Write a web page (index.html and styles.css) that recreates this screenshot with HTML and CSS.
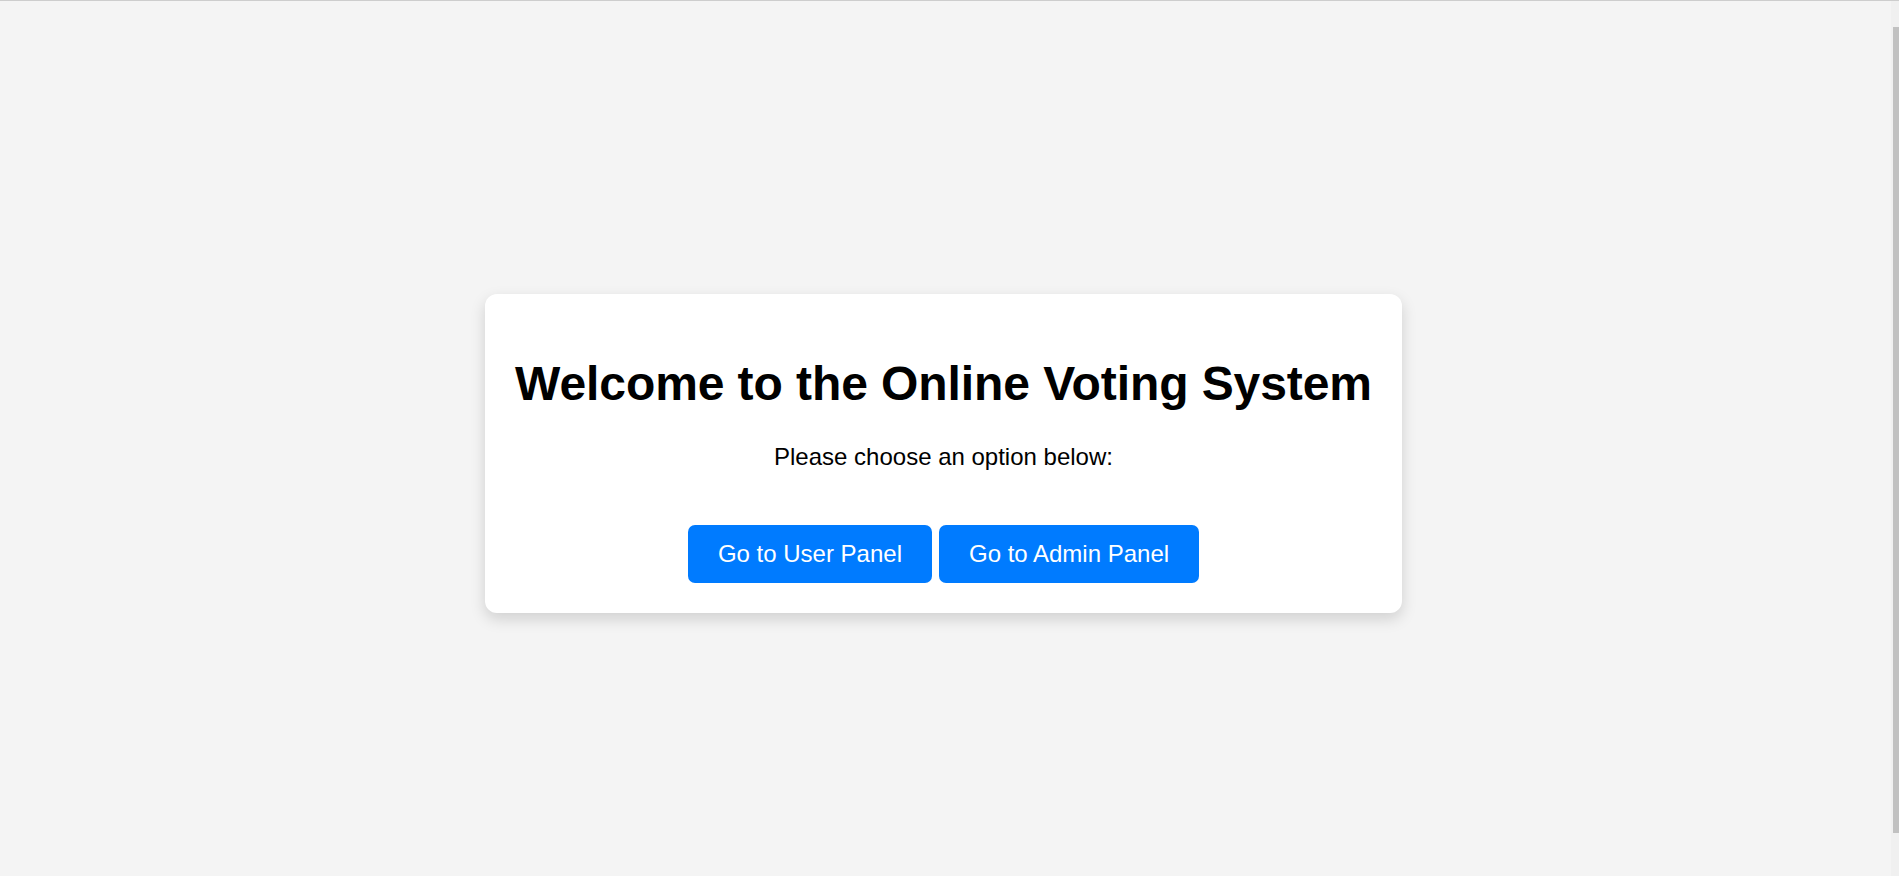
FILE: index.html
```html
<!DOCTYPE html>
<html lang="en">
<head>
<meta charset="utf-8">
<title>Online Voting System</title>
<link rel="stylesheet" href="styles.css">
</head>
<body>
  <div class="card">
    <h1 class="title">Welcome to the Online Voting System</h1>
    <p class="lead">Please choose an option below:</p>
    <div class="actions">
      <button class="btn" type="button">Go to User Panel</button>
      <button class="btn" type="button">Go to Admin Panel</button>
    </div>
  </div>
  <div class="scrollbar" aria-hidden="true"><div class="scrollbar-thumb"></div></div>
</body>
</html>
```

FILE: styles.css
```css
html {
  background: #f4f4f4;
  border-top: 1px solid #cdcdcd;
}

body {
  margin: 12px;
  box-sizing: border-box;
  height: 100vh;
  padding: 4px 12px 0 0;
  display: flex;
  justify-content: center;
  align-items: center;
  font-family: "Liberation Sans", Arial, sans-serif;
  font-size: 24px;
  color: #000;
}

.card {
  background: #fff;
  padding: 30px;
  border-radius: 12px;
  box-shadow: 0 6px 15px rgba(0, 0, 0, 0.15);
  text-align: center;
}

.title {
  font-size: 48px;
  font-weight: bold;
  letter-spacing: -0.08px;
  margin: 32px 0;
}

.lead {
  font-size: 24px;
  margin: 24px 0 0;
}

.actions {
  display: flex;
  justify-content: center;
  gap: 7px;
  padding-top: 54px;
}

.btn {
  font-family: "Liberation Sans", Arial, sans-serif;
  font-size: 24px;
  line-height: normal;
  color: #fff;
  background: #007bff;
  border: none;
  border-radius: 7px;
  padding: 15px 30px;
  cursor: pointer;
}

.scrollbar {
  position: fixed;
  top: 1px;
  right: 0;
  bottom: 0;
  width: 8px;
  background: #f0f0f0;
  padding: 26px 0 43px 2px;
  box-sizing: border-box;
}

.scrollbar-thumb {
  height: 100%;
  background: #c1c1c1;
}
```
